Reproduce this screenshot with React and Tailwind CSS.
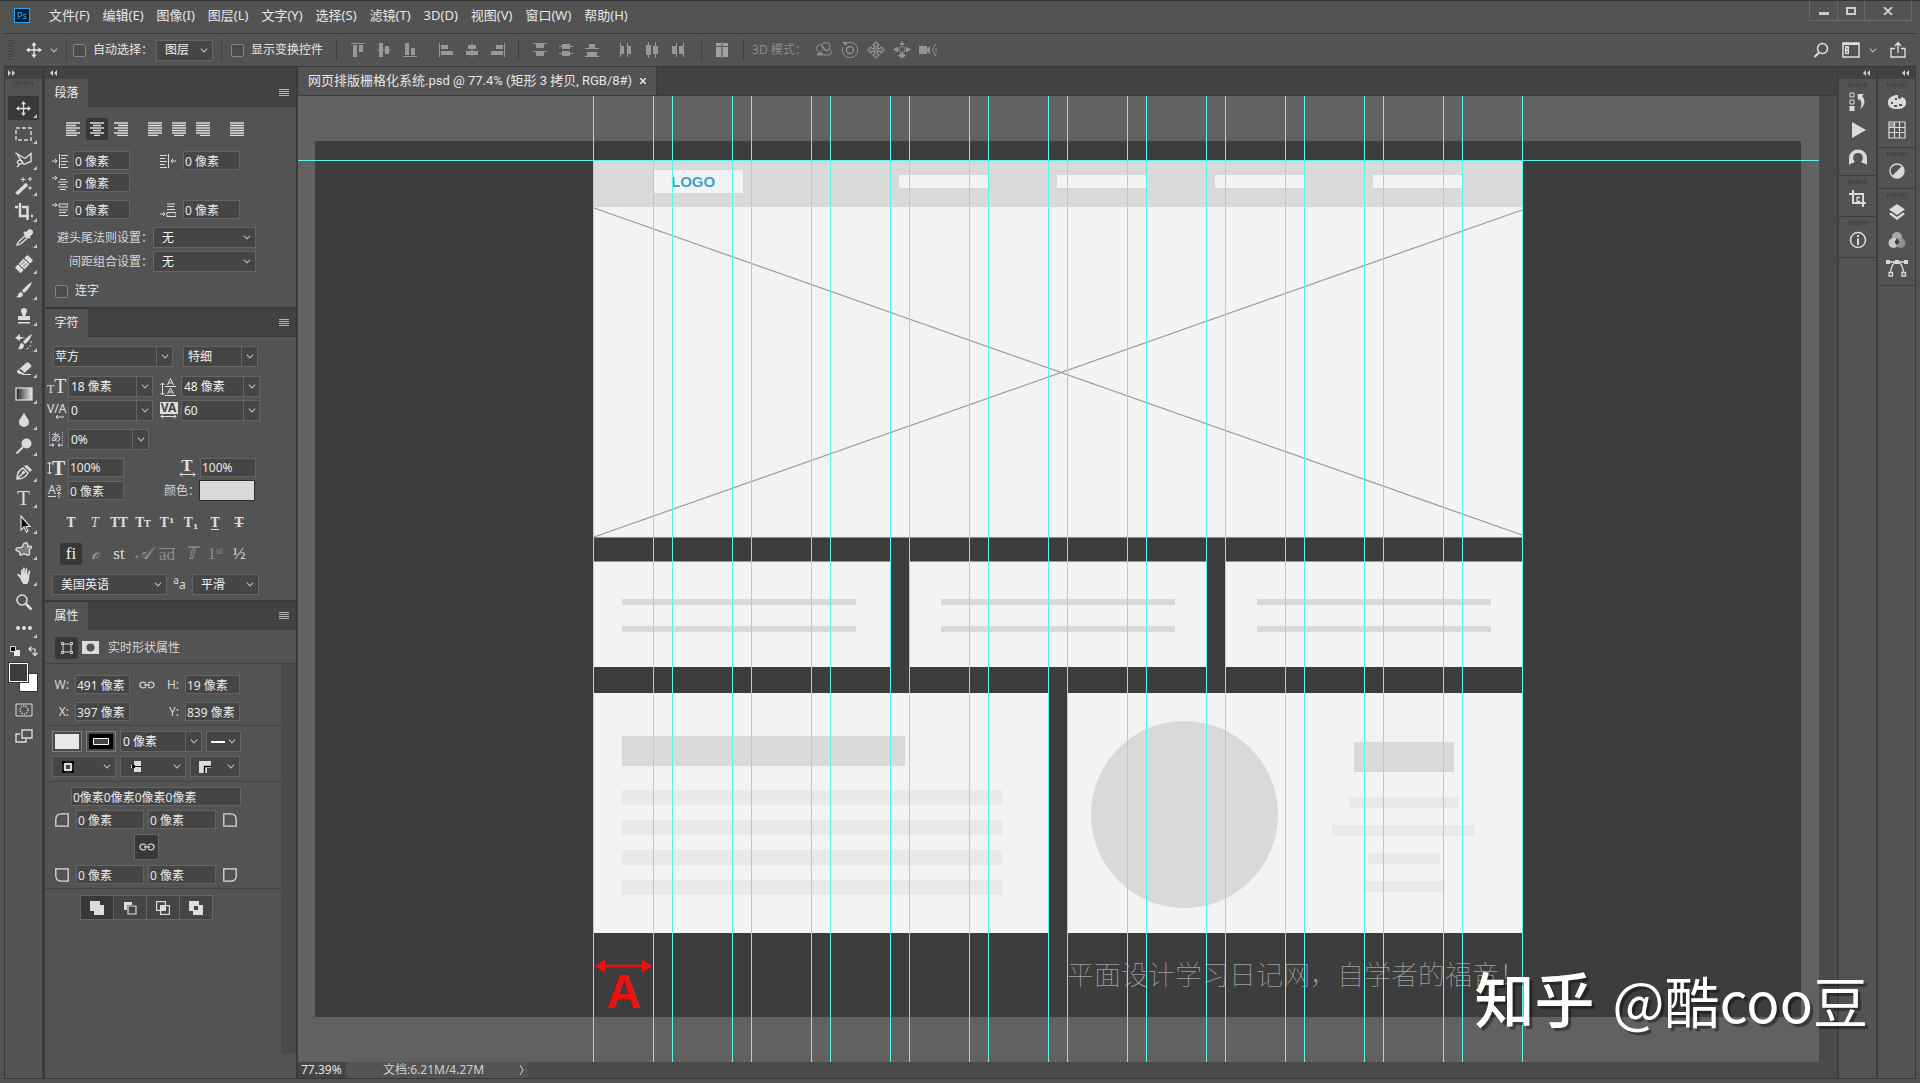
import React from 'react';
import clsx from 'clsx';

/* ---------- shared bits ---------- */

function Icon({ w = 18, h = 18, className, children }) {
  return (
    <svg width={w} height={h} viewBox={`0 0 ${w} ${h}`} fill="none" stroke="currentColor" className={clsx('shrink-0', className)} aria-hidden="true">
      {children}
    </svg>
  );
}

function Chevron({ className }) {
  return (
    <Icon w={8} h={5} className={clsx('text-[#b8b8b8]', className)}>
      <path d="M.8 .6 4 4 7.2 .6" strokeWidth="1.1" />
    </Icon>
  );
}

function Grip({ className }) {
  return (
    <div className={clsx('flex h-1 shrink-0 justify-center gap-px', className)}>
      {Array.from({ length: 10 }, (_, i) => <i key={i} className="w-px bg-[#3f3f3f]" />)}
    </div>
  );
}

function Field({ label, value, className }) {
  return (
    <input
      aria-label={label}
      defaultValue={value}
      className={clsx('h-[19px] border border-[#646464] bg-[#454545] px-px text-xs leading-4 text-[#e8e8e8] outline-none', className)}
    />
  );
}

function Select({ label, value, divider, className, pad = 'pl-2', children }) {
  return (
    <span className={clsx('relative flex h-[21px] shrink-0 items-center border border-[#646464] bg-[#454545]', className)}>
      {children}
      <select aria-label={label} className={clsx('h-full w-full appearance-none bg-transparent text-xs leading-4 text-[#f0f0f0] outline-none', pad)}>
        <option>{value}</option>
      </select>
      <span className={clsx('pointer-events-none absolute inset-y-0 right-0 flex w-4 items-center justify-center', divider && 'border-l border-[#646464]')}>
        <Chevron />
      </span>
    </span>
  );
}

function Check({ id, children, className }) {
  return (
    <label htmlFor={id} className={clsx('flex items-center gap-[7px] text-xs leading-4', className)}>
      <input id={id} type="checkbox" className="h-[13px] w-[13px] appearance-none rounded-[2px] border border-[#858585] bg-[#4b4b4b]" />
      {children}
    </label>
  );
}

function IconButton({ label, className, children }) {
  return (
    <button type="button" aria-label={label} className={clsx('flex shrink-0 items-center justify-center', className)}>
      {children}
    </button>
  );
}

function Vr() {
  return <div className="h-[22px] w-px shrink-0 bg-[#404040]" />;
}

/* ---------- menu bar ---------- */

const MENUS = ['文件(F)', '编辑(E)', '图像(I)', '图层(L)', '文字(Y)', '选择(S)', '滤镜(T)', '3D(D)', '视图(V)', '窗口(W)', '帮助(H)'];

function MenuBar() {
  return (
    <header className="flex h-8 shrink-0 items-start justify-between pr-2">
      <div className="flex h-7 items-center">
        <div className="ml-[14px] flex h-[15px] w-4 items-center justify-center border border-[#2fa3f7] bg-[#001d2f] text-[9px] leading-none text-[#35b4ff]">
          Ps
        </div>
        <nav className="ml-[19px] flex gap-[13px] text-[13px] leading-5">
          {MENUS.map((m) => <button key={m} type="button">{m}</button>)}
        </nav>
      </div>
      <div className="flex h-5 border border-t-0 border-[#686868] text-[#cccccc]">
        <IconButton label="最小化" className="w-[27px]">
          <Icon w={10} h={10}><path d="M0 7.5h10" strokeWidth="3" /></Icon>
        </IconButton>
        <IconButton label="最大化" className="w-[28px] border-x border-[#686868]">
          <Icon w={10} h={8}><path d="M1 1h8v6H1z" strokeWidth="2" /></Icon>
        </IconButton>
        <IconButton label="关闭" className="w-[46px]">
          <Icon w={10} h={8}><path d="M1 0l8 8M9 0L1 8" strokeWidth="2" /></Icon>
        </IconButton>
      </div>
    </header>
  );
}

/* ---------- options bar ---------- */

function MoveIcon({ size = 16 }) {
  return (
    <svg width={size} height={size} viewBox="0 0 16 16" fill="currentColor" aria-hidden="true">
      <path d="M8 0l2.600 3.400H8.700v3.900h3.900V5.400L16 8l-3.400 2.600V8.700H8.700v3.900h1.900L8 16l-2.600-3.400h1.900V8.700H3.400v1.900L0 8l3.400-2.600v1.900h3.900V3.400H5.400z" />
    </svg>
  );
}

const ALIGN_ICONS = {
  top: 'M1 1h14v1H1zM3 3h4v12H3zM9 3h4v7H9z',
  middle: 'M1 7.500h14v1H1zM3 1h4v14H3zM9 4h4v8H9z',
  bottom: 'M1 14h14v1H1zM3 1h4v12H3zM9 6h4v7H9z',
  left: 'M1 1h1v14H1zM3 3h7v4H3zM3 9h12v4H3z',
  center: 'M7.500 1h1v14h-1zM4 3h8v4H4zM2 9h12v4H2z',
  right: 'M14 1h1v14h-1zM6 3h7v4H6zM1 9h12v4H1z',
};
const SPREAD_ICONS = {
  top: 'M1 1h14v1H1zM4 2h8v4H4zM1 9h14v1H1zM4 10h8v4H4z',
  middle: 'M1 4h14v1H1zM4 2h8v5H4zM1 11h14v1H1zM4 9h8v5H4z',
  bottom: 'M1 6h14v1H1zM5 2h6v4H5zM1 14h14v1H1zM3 10h10v4H3z',
  left: 'M2 1h1v14H2zM3 4h3v8H3zM9 1h1v14H9zM10 4h3v8h-3z',
  center: 'M4 0h1v16H4zM2 3h5v10H2zM11 0h1v16h-1zM9 4h5v8H9z',
  right: 'M6 1h1v14H6zM2 4h4v8H2zM13 1h1v14h-1zM9 4h4v8H9z',
};

function GlyphGroup({ icons, prefix, gaps }) {
  return Object.entries(icons).map(([name, d], i) => (
    <IconButton key={name} label={prefix + name} className={clsx('h-5 w-4', gaps[i])}>
      <svg width="16" height="16" viewBox="0 0 16 16" fill="#989898" aria-hidden="true"><path d={d} /></svg>
    </IconButton>
  ));
}

function OptionsBar() {
  return (
    <div className="flex h-[33px] shrink-0 items-center border-t border-[#383838] pr-[9px]">
      <div className="ml-1 flex h-5 w-[5px] flex-col justify-between">
        {Array.from({ length: 8 }, (_, i) => <i key={i} className="h-px bg-[#434343]" />)}
      </div>
      <div className="ml-[13px] flex items-center gap-2">
        <MoveIcon />
        <Chevron />
      </div>
      <div className="ml-2"><Vr /></div>
      <Check id="auto-select" className="ml-1.5">自动选择：</Check>
      <Select label="自动选择" value="图层" className="ml-[3px] w-[57px]" />
      <div className="ml-2"><Vr /></div>
      <Check id="show-transform" className="ml-[9px]">显示变换控件</Check>
      <div className="ml-[13px]"><Vr /></div>
      <GlyphGroup icons={ALIGN_ICONS} prefix="对齐 " gaps={['ml-[13px]', 'ml-2.5', 'ml-2.5', 'ml-5', 'ml-2.5', 'ml-2.5']} />
      <div className="ml-3"><Vr /></div>
      <GlyphGroup icons={SPREAD_ICONS} prefix="分布 " gaps={['ml-[13px]', 'ml-2.5', 'ml-2.5', 'ml-[18px]', 'ml-2.5', 'ml-2.5']} />
      <div className="ml-[15px]"><Vr /></div>
      <IconButton label="自动对齐图层" className="ml-3 h-5 w-4">
        <svg width="16" height="16" viewBox="0 0 16 16" fill="#a2a2a2" aria-hidden="true">
          <path d="M2 1h5v3H2zM2 5h5v10H2zM9 1h5v3H9zM9 5h5v10H9zM7.600 0h.8v16h-.8z" />
        </svg>
      </IconButton>
      <div className="ml-[13px]"><Vr /></div>
      <span className="ml-2 w-[63px] text-xs leading-4 text-[#8c8c8c]">3D 模式：</span>
      <div className="flex gap-2 text-[#939393]">
        <IconButton label="旋转 3D 对象">
          <Icon><circle cx="11" cy="5.500" r="4" /><path d="M7 4C3 3 0 6 2 9c2 3 5 5 10 5 4 1 6-3 2-6" /><path d="M7 10l-5 4M7 5l6 6" /><path d="M2 12.500h6v2H2z" fill="currentColor" stroke="none" /></Icon>
        </IconButton>
        <IconButton label="滚动 3D 对象">
          <Icon><circle cx="9" cy="9" r="3.500" strokeWidth="1.300" /><path d="M5 2.500A7.600 7.600 0 1 1 2 6" /><path d="M1 1h4.500v4z" fill="currentColor" stroke="none" /></Icon>
        </IconButton>
        <IconButton label="拖动 3D 对象">
          <Icon><path d="M9 1l3 3-1.500 1v2.500H13L14 6l3 3-3 3-1-1.500h-2.500V13l1.500 1-3 3-3-3 1.500-1v-2.500H5L4 12 1 9l3-3 1 1.500h2.500V5L6 4z" strokeWidth="1.200" /><path d="M9 4v10M4 9h10" strokeWidth=".8" /></Icon>
        </IconButton>
        <IconButton label="滑动 3D 对象">
          <Icon><circle cx="9" cy="8.500" r="3" /><path d="M9 0l2.500 4h-5zM0 8.500l5-3v6zM18 8.500l-5-3v6zM9 17.500l-4-3 4-3 4 3z" fill="currentColor" stroke="none" /></Icon>
        </IconButton>
        <IconButton label="缩放 3D 对象">
          <Icon><path d="M0 5h8v3l3-3v8l-3-3v3H0z" fill="currentColor" stroke="none" /><path d="M17 3l-4 6 4 6M17 7v4" /></Icon>
        </IconButton>
      </div>
      <div className="ml-auto flex items-center text-[#e0e0e0]">
        <IconButton label="搜索">
          <Icon w={16} h={16}><circle cx="9.500" cy="6.500" r="5" strokeWidth="1.500" /><path d="M6 10.500L1.500 15" strokeWidth="2" /></Icon>
        </IconButton>
        <IconButton label="选择工作区" className="ml-[13px] gap-[9px]">
          <Icon w={18} h={16}><path d="M1 1h16v14H1z" strokeWidth="1.500" /><path d="M1 2h16" strokeWidth="2" /><path d="M3 4h4v8H3z" fill="currentColor" stroke="none" /><path d="M4.500 5.500h1v2h-1zM4.500 9h1v2h-1z" fill="#535353" stroke="none" /></Icon>
          <Chevron />
        </IconButton>
        <IconButton label="共享图像" className="ml-3">
          <Icon w={18} h={18}><path d="M6 7.500H2v8.500h14V7.500h-4M9 12V2M6 5l3-3.500L12 5" strokeWidth="1.300" /></Icon>
        </IconButton>
      </div>
    </div>
  );
}

/* ---------- toolbar ---------- */

const TOOLS = [
  ['移动', <MoveIcon size={15} />],
  ['矩形选框', <Icon h={16}><rect x="1" y="2" width="15" height="12" strokeWidth="1.400" strokeDasharray="4 2" /></Icon>],
  ['多边形套索', <Icon><path d="M1.500 2.500l8.500 5 6-5v8l-7 3-3-4-4-7zM6 9.500c-4-1-5 3-1.500 3.500 3 .5 4-3 1.500-3.500zM5 13l-3 3" strokeWidth="1.400" /></Icon>],
  ['魔棒', <Icon><path d="M1.500 17L12 7" strokeWidth="3.600" /><path d="M8 0v5M5.500 2.500h5M15 0v4M13 2h4M15 9v4M13 11h4" /></Icon>],
  ['裁剪', <Icon><path d="M5 0v13h9M7 4h5.500v13M16 13h2M0 4h3" strokeWidth="2.400" /></Icon>],
  ['吸管', <Icon><path d="M2 16c0-3 5-6 8-9l2 2c-3 3-6 7-10 7z" strokeWidth="1.400" /><path d="M9 3l6 6M14 1.500c2-1 4 1 2.500 3L13 8l-3-3z" strokeWidth="2" fill="currentColor" /></Icon>],
  ['修复画笔', <Icon><g transform="rotate(-45 9 9)"><rect x="0" y="5" width="18" height="8" rx="1.500" fill="currentColor" stroke="none" /><path d="M5 5v8M13 5v8" stroke="#535353" /><path d="M7 7.500h4M7 10.500h4" stroke="#535353" strokeDasharray="1.500 1" /></g></Icon>],
  ['画笔', <Icon><path d="M17 1C13 3 9 7 7 10l2 2c3-2 7-7 8-11z M6 11c-3 0-2 4-5 5 4 1 7 0 7-3z" fill="currentColor" stroke="none" /></Icon>],
  ['仿制图章', <Icon><path d="M6 4a3 3 0 1 1 6 0c0 2-1.500 2-1.500 5H15v4H3V9h4.500c0-3-1.500-3-1.500-5zM3 15h12v1.500H3z" fill="currentColor" stroke="none" /></Icon>],
  ['历史记录画笔', <Icon><path d="M17 1C13 3 10 6 8 9l2 2c3-2 6-6 7-10zM7 10c-3 0-2 5-4 6 4 1 6-1 6-4zM0 5l5-4v3c2 0 4 0 5 1-3 0-4 1-5 1v2z" fill="currentColor" stroke="none" /><path d="M16 8c1 5-2 8-6 8" strokeDasharray="2 2" /></Icon>],
  ['橡皮擦', <Icon><path d="M2 12l9-8c1-1 2-1 3 0l2 2c1 1 0 2 0 2l-8 7H4l-2-2z" fill="currentColor" stroke="none" /><path d="M4.500 10.500l4 3" stroke="#535353" strokeWidth="1.600" /><path d="M7 15.500h9" /></Icon>],
  ['渐变', <Icon w={18} h={14}>
    <defs><linearGradient id="ramp"><stop stopColor="#222" /><stop offset="1" stopColor="#e8e8e8" /></linearGradient></defs>
    <rect x="1" y="1" width="16" height="12" fill="url(#ramp)" strokeWidth="1.300" /></Icon>],
  ['模糊', <Icon><path d="M9 1c1 5 5 6 5 10a5 5 0 0 1-10 0c0-4 4-5 5-10z" fill="currentColor" stroke="none" /></Icon>],
  ['减淡', <Icon><circle cx="11.500" cy="6.500" r="5" fill="currentColor" stroke="none" /><path d="M8 10l-6.500 6.500" strokeWidth="2" /></Icon>],
  ['钢笔', <Icon><path d="M2 16c0-5 2-9 6-11l5 5c-2 4-6 6-11 6zM2 16l6-6" strokeWidth="1.500" /><circle cx="8.500" cy="9.500" r="1.200" fill="currentColor" /><path d="M9 3l6 6 2-2-5-5z" fill="currentColor" stroke="none" /></Icon>],
  ['文字', <span className="font-['Liberation_Serif',serif] text-[21px] leading-5">T</span>],
  ['路径选择', <Icon><path d="M6 1v14l3-3 2.500 5 1.500-1-2-4.500h4z" fill="#111" strokeWidth="1.200" /></Icon>],
  ['自定形状', <Icon><path d="M10 2c3-1 3 2 3 4 3-2 5 0 2 2-2 2 1 4-1 6-2 1-4-2-6-1-2 2-4 1-3-1 0-2-5-2-4-4 1-3 4 0 6-2 1-1 1-4 3-4z" fill="#7c7c7c" strokeWidth="1.400" /></Icon>],
  ['抓手', <Icon><path d="M4 11L1 7.500c1-1.500 2-.5 4 1V3c0-1 1.700-1 1.700 0l.3 4V1.500c0-1.300 1.800-1.300 1.800 0V7l.7-5c.1-1.200 1.800-1 1.700.2L11 8l1.500-4c.5-1 2-.6 1.700.5-.7 3-1 4-1 6.500-.5 3-1 5-2.200 6H7.500C6 15.500 5 13 4 11z" fill="currentColor" stroke="none" transform="translate(1 0)" /></Icon>],
  ['缩放', <Icon><circle cx="7" cy="7" r="5" strokeWidth="1.600" /><path d="M11 11l5.500 5.500" strokeWidth="2.500" /></Icon>],
  ['更多工具', <Icon w={18} h={6}><path d="M3 1a2 2 0 1 0 .01 0zM9 1a2 2 0 1 0 .01 0zM15 1a2 2 0 1 0 .01 0z" fill="currentColor" stroke="none" /></Icon>],
];

function ToolBar() {
  return (
    <aside className="flex w-[38px] shrink-0 flex-col items-center border-r border-[#3a3a3a] text-[#dcdcdc]">
      <div className="flex h-3 w-full items-center bg-[#424242] pl-[3px] text-[#d0d0d0]">
        <Icon w={8} h={6}><path d="M0 0l3 3-3 3zM4 0l3 3-3 3z" fill="currentColor" stroke="none" /></Icon>
      </div>
      <Grip className="mt-0.5" />
      <div className="mt-[11px] flex flex-col gap-0.5">
        {TOOLS.map(([name, icon], i) => (
          <IconButton
            key={name}
            label={name}
            className={clsx('relative h-6 w-[31px]', i === 0 && 'rounded-[2px] bg-[#383838]')}
          >
            {icon}
            {i !== 19 && <Icon w={4} h={4} className="absolute bottom-0.5 right-0.5"><path d="M4 0v4H0z" fill="#c4c4c4" stroke="none" /></Icon>}
          </IconButton>
        ))}
      </div>
      <div className="mt-1.5 flex w-[28px] items-center justify-between">
        <Icon w={10} h={10}><path d="M4 4h6v6H4z" fill="#e8e8e8" stroke="none" /><path d="M.5 .5h5v5h-5z" fill="#000" /></Icon>
        <Icon w={10} h={10}><path d="M1 3h6v6M3.500 .5L1 3l2.500 2.500M4.500 7L7 9.500 9.500 7" strokeWidth="1.200" /></Icon>
      </div>
      <div className="mt-[7px] grid w-[29px]">
        <button type="button" aria-label="背景色" className="col-start-1 row-start-1 ml-[10px] mt-[10px] h-[19px] w-[19px] border border-[#333] bg-white" />
        <button type="button" aria-label="前景色" className="col-start-1 row-start-1 h-[19px] w-[19px] border border-white bg-[#3c3c3c] outline outline-[#333]" />
      </div>
      <IconButton label="快速蒙版" className="mt-[11px]">
        <Icon w={18} h={14}><path d="M1 1h16v12H1z" /><circle cx="9" cy="7" r="4" strokeDasharray="1.300 1.200" strokeWidth="1.300" /></Icon>
      </IconButton>
      <IconButton label="屏幕模式" className="mt-3">
        <Icon w={18} h={14}><path d="M7 1h10v8H7z" strokeWidth="1.400" /><path d="M5 5H1v8h10v-3" strokeWidth="1.400" /></Icon>
      </IconButton>
    </aside>
  );
}

/* ---------- side panels ---------- */

function Panel({ title, className, children }) {
  return (
    <section className={clsx('flex flex-col text-xs', className)}>
      <header className="flex h-[28px] shrink-0 items-center justify-between border-b border-[#3c3c3c] bg-[#424242] pr-[7px]">
        <h2 className="-mb-px flex h-[28px] w-[43px] items-center justify-center bg-[#535353] text-[#ececec]">{title}</h2>
        <IconButton label="面板菜单" className="text-[#b4b4b4]">
          <Icon w={10} h={8}><path d="M0 .5h10M0 2.500h10M0 4.500h10M0 6.500h10" /></Icon>
        </IconButton>
      </header>
      {children}
    </section>
  );
}

// six text rules; each entry is [start, end] of one rule
function Rules({ rows }) {
  return (
    <Icon w={14} h={14} className="text-[#dcdcdc]">
      <path d={rows.map(([a, b], i) => `M${a} ${i * 2.5 + 1}H${b}`).join('')} strokeWidth="1.300" />
    </Icon>
  );
}

const FULL = [0, 14];
const ALIGNMENTS = [
  ['左对齐', [FULL, [0, 10], FULL, [0, 10], FULL, [0, 11]]],
  ['居中', [FULL, [3, 11], FULL, [3, 11], FULL, [4, 10]]],
  ['右对齐', [FULL, [4, 14], FULL, [4, 14], FULL, [3, 14]]],
  ['末行左对齐', [FULL, FULL, FULL, FULL, FULL, [0, 10]]],
  ['末行居中', [FULL, FULL, FULL, FULL, FULL, [2, 12]]],
  ['末行右对齐', [FULL, FULL, FULL, FULL, FULL, [4, 14]]],
  ['全部对齐', [FULL, FULL, FULL, FULL, FULL, FULL]],
];

function ParagraphPanel() {
  return (
    <Panel title="段落" className="h-[230px]">
      <div className="flex gap-0.5 pl-[17px] pt-[11px]">
        {ALIGNMENTS.map(([name, rows], i) => (
          <IconButton
            key={name}
            label={name}
            className={clsx('h-[22px] w-[22px]', i === 1 && 'rounded-[2px] bg-[#383838]', (i === 3 || i === 6) && 'ml-[10px]')}
          >
            <Rules rows={rows} />
          </IconButton>
        ))}
      </div>
      <div className="mt-[11px] flex items-center pl-[7px] text-[#dcdcdc]">
        <Icon w={16} h={14} className="mr-[5px]"><path d="M0 7h5M3 5l2 2-2 2M7.500 0v14M9 1.500h7M9 4.500h5M9 7.500h7M9 10.500h5M9 13.500h7" /></Icon>
        <Field label="左缩进" value="0 像素" className="w-[57px]" />
        <Icon w={16} h={14} className="ml-[30px] mr-[7px]"><path d="M16 7h-5M13 5l-2 2 2 2M8.500 0v14M0 1.500h7M0 4.500h5M0 7.500h7M0 10.500h5M0 13.500h7" /></Icon>
        <Field label="右缩进" value="0 像素" className="w-[57px]" />
      </div>
      <div className="mt-[3px] flex items-center pl-[7px] text-[#dcdcdc]">
        <Icon w={16} h={14} className="mr-[5px]"><path d="M0 2h4M3 0l2 2-2 2M8 3.500h6M6 6h10M8 8.500h6M6 11h10M8 13.500h6" /></Icon>
        <Field label="首行缩进" value="0 像素" className="w-[57px]" />
      </div>
      <div className="mt-2 flex items-center pl-[7px] text-[#dcdcdc]">
        <Icon w={16} h={14} className="mr-[5px]"><path d="M0 2h4M3 0l2 2-2 2M7 1h9v3H7zM7 7h9M7 9.500h7M7 12.500h9" /></Icon>
        <Field label="段前空格" value="0 像素" className="w-[57px]" />
        <Icon w={16} h={14} className="ml-[30px] mr-[7px]"><path d="M0 11h4M3 9l2 2-2 2M7 1h8M7 3.500h7M7 6.500h8M7 9.500h9v4H7z" /></Icon>
        <Field label="段后空格" value="0 像素" className="w-[57px]" />
      </div>
      <div className="mt-2 flex items-center text-[#d6d6d6]">
        <span className="w-[108px] whitespace-nowrap text-right">避头尾法则设置：</span>
        <Select label="避头尾法则设置" value="无" className="w-[103px]" />
      </div>
      <div className="mt-[3px] flex items-center text-[#d6d6d6]">
        <span className="w-[108px] whitespace-nowrap text-right">间距组合设置：</span>
        <Select label="间距组合设置" value="无" className="w-[103px]" />
      </div>
      <Check id="hyphenate" className="ml-[10px] mt-[11px]">连字</Check>
    </Panel>
  );
}

const STYLES = [
  ['仿粗体', <b className="font-black">T</b>],
  ['仿斜体', <i className="font-normal">T</i>],
  ['全部大写', 'TT'],
  ['小型大写', <span>T<span className="text-[9px]">T</span></span>],
  ['上标', <span>T<sup className="text-[8px]">1</sup></span>],
  ['下标', <span>T<sub className="text-[8px]">1</sub></span>],
  ['下划线', <span className="border-b border-current leading-3">T</span>],
  ['删除线', <s>T</s>],
];
const FEATURES = [
  ['标准连字', 'fi', 'text-[#f0f0f0] bg-[#383838] rounded-[2px]'],
  ['上下文替代字', <i>ℴ</i>, 'text-[#9a9a9a]'],
  ['自由连字', 'st', 'text-[#dcdcdc]'],
  ['花饰字', <i>𝒜</i>, 'text-[#9a9a9a]'],
  ['替代样式', <span className="border-t border-current leading-[12px]">ad</span>, 'text-[#8a8a8a]'],
  ['标题替代字', <i>𝕋</i>, 'text-[#9a9a9a]'],
  ['序数字', <span>1<sup className="text-[10px]">st</sup></span>, 'text-[#8a8a8a]'],
  ['分数字', '½', 'text-[#dcdcdc]'],
];

function CharacterPanel() {
  const serif = "font-['Liberation_Serif',serif]";
  return (
    <Panel title="字符" className="h-[293px]">
      <div className="mt-[9px] flex pl-2">
        <Select label="字体" value="苹方" divider pad="pl-px" className="w-[120px]" />
        <Select label="字体样式" value="特细" divider pad="pl-1" className="ml-[10px] w-[75px]" />
      </div>
      <div className="mt-[9px] flex h-[21px] items-center pl-0.5 text-[#e0e0e0]">
        <span className={clsx(serif, 'w-[21px] text-[20px] leading-5')}><span className="text-xs">T</span>T</span>
        <Select label="字体大小" value="18 像素" divider pad="pl-0.5" className="w-[85px]" />
        <Icon w={17} h={18} className="ml-[7px] mr-1">
          <path d="M2.500 5v12M.5 7l2-2 2 2M.5 15l2 2 2-2M5 17.500h11M5 8.500h11M7.500 7l3-6.500 3 6.500M8.500 5h4M7.500 16l3-6 3 6M8.500 14h4" />
        </Icon>
        <Select label="行距" value="48 像素" divider pad="pl-0.5" className="w-[79px]" />
      </div>
      <div className="mt-[3px] flex h-[21px] items-center pl-0.5 text-[#e0e0e0]">
        <span className="flex w-[21px] flex-col text-[12px] leading-[12px]">V/A
          <Icon w={10} h={4} className="ml-2"><path d="M9 2H1M3 0L1 2l2 2" /></Icon>
        </span>
        <Select label="字距微调" value="0" divider pad="pl-0.5" className="w-[85px]" />
        <span className="ml-[6px] mr-[3px] flex w-[19px] flex-col items-center">
          <span className="w-[18px] bg-[#dedede] text-center text-[12px] font-bold leading-[12px] text-[#444]">VA</span>
          <Icon w={17} h={5}><path d="M1 2.500h15M3 .5l-2 2 2 2M14 .5l2 2-2 2" /></Icon>
        </span>
        <Select label="字距调整" value="60" divider pad="pl-0.5" className="w-[79px]" />
      </div>
      <div className="mt-2 flex h-[21px] items-center pl-1 text-[#dcdcdc]">
        <span className="flex w-[19px] flex-col text-[10px] leading-[11px]">
          <span className="w-[14px] border-x border-dotted border-[#b0b0b0] text-center">あ</span>
          <Icon w={14} h={4}><path d="M0 2h5M3 .5L5 2 3 3.500M14 2H9M11 .5L9 2l2 1.500" /></Icon>
        </span>
        <Select label="比例间距" value="0%" divider pad="pl-0.5" className="w-[81px]" />
      </div>
      <div className="mt-[7px] flex h-[21px] items-center pl-0.5 text-[#e0e0e0]">
        <span className="flex w-[21px] items-center">
          <Icon w={5} h={14}><path d="M2.500 1v12M.5 3l2-2 2 2M.5 11l2 2 2-2" /></Icon>
          <span className={clsx(serif, 'text-[20px] font-bold leading-5')}>T</span>
        </span>
        <Field label="垂直缩放" value="100%" className="w-[56px]" />
        <span className={clsx(serif, 'ml-[54px] mr-1 flex w-[18px] flex-col items-center text-[17px] font-bold leading-[13px]')}>T
          <Icon w={17} h={5}><path d="M1 2.500h15M3 .5l-2 2 2 2M14 .5l2 2-2 2" /></Icon>
        </span>
        <Field label="水平缩放" value="100%" className="w-[56px]" />
      </div>
      <div className="mt-0.5 flex h-[21px] items-center pl-[3px] text-[#d6d6d6]">
        <span className="flex w-5 items-start">
          <span className="border-b border-current text-[12px] leading-[13px]">A</span>
          <span className="flex flex-col items-center text-[10px] leading-[8px]">a
            <Icon w={6} h={7}><path d="M3 7V1M1 3l2-2 2 2" /></Icon>
          </span>
        </span>
        <Field label="基线偏移" value="0 像素" className="w-[56px]" />
        <span className="ml-10 w-[35px] whitespace-nowrap">颜色：</span>
        <button type="button" aria-label="文本颜色" className="h-[21px] w-[56px] border border-[#2c2c2c] bg-[#d9d9d9]" />
      </div>
      <div className="mt-[11px] flex gap-0.5 pl-[15px] font-['DejaVu_Serif',serif] text-[12px] font-bold text-[#dcdcdc]">
        {STYLES.map(([name, glyph]) => <IconButton key={name} label={name} className="h-[22px] w-[22px] leading-4">{glyph}</IconButton>)}
      </div>
      <div className={clsx(serif, 'mt-[9px] flex gap-0.5 pl-[15px] text-[17px]')}>
        {FEATURES.map(([name, glyph, tone]) => (
          <IconButton key={name} label={name} className={clsx('h-[22px] w-[22px] leading-4', tone)}>{glyph}</IconButton>
        ))}
      </div>
      <div className="mt-[9px] flex h-[21px] items-center pl-[7px]">
        <Select label="语言" value="美国英语" className="w-[115px]" />
        <span className="w-[25px] text-center text-[#dcdcdc]"><sup className="text-[10px]">a</sup>a</span>
        <Select label="消除锯齿" value="平滑" className="w-[67px]" />
      </div>
    </Panel>
  );
}

function LinkIcon() {
  return (
    <Icon w={16} h={8} className="text-[#cfcfcf]">
      <path d="M7 2.500C6 .5 1 .5 1 4s5 3.500 6 1.500M9 2.500c1-2 6-2 6 1.500s-5 3.500-6 1.500M5 4h6" strokeWidth="1.300" />
    </Icon>
  );
}

function Corner({ turn }) {
  return (
    <Icon w={14} h={14} className="text-[#dcdcdc]">
      <path d="M.8 13.200V6.500Q.8 .8 6.500 .8h6.700v12.400z" strokeWidth="1.300" transform={`rotate(${turn} 7 7)`} />
    </Icon>
  );
}

const PATH_OPS = [
  ['合并形状', <path d="M0 0h10v4h4v10H4v-4H0z" fill="currentColor" stroke="none" />],
  ['减去顶层形状', <><path d="M1 1h8v3H4v5H1z" fill="currentColor" stroke="none" /><path d="M5 5h8v8H5z" strokeWidth="1.200" /></>],
  ['与形状区域相交', <><path d="M.6 .6h8.800v8.800H.6zM4.600 4.600h8.800v8.800H4.600z" strokeWidth="1.200" /><path d="M5 5h4v4H5z" fill="currentColor" stroke="none" /></>],
  ['排除重叠形状', <path d="M0 0h10v4h4v10H4v-4H0zM5 5v4h4V5z" fill="currentColor" stroke="none" fillRule="evenodd" />],
];

function PropertiesPanel() {
  return (
    <Panel title="属性" className="min-h-0 flex-1">
      <div className="flex h-[34px] shrink-0 items-center border-b border-[#424242] pl-[10px] pt-0.5 text-[#d6d6d6]">
        <IconButton label="形状属性" className="h-[22px] w-[23px] rounded-[2px] bg-[#383838]">
          <Icon w={12} h={12}><path d="M2 2h8v8H2z" /><path d="M.5 .5h2v2h-2zM9.500 .5h2v2h-2zM.5 9.500h2v2h-2zM9.500 9.500h2v2h-2z" fill="#383838" /></Icon>
        </IconButton>
        <IconButton label="蒙版" className="ml-1">
          <Icon w={17} h={13}><path d="M0 0h17v13H0z" fill="#dcdcdc" stroke="none" /><circle cx="8.500" cy="6.500" r="4" fill="#535353" stroke="none" /></Icon>
        </IconButton>
        <span className="ml-[9px]">实时形状属性</span>
      </div>
      <div className="flex min-h-0 flex-1">
        <div className="flex min-w-0 flex-1 flex-col text-[#d6d6d6]">
          <div className="flex flex-col gap-2 border-b border-[#424242] pb-1 pt-[11px]">
            <div className="flex items-center">
              <span className="w-[30px] pr-[6px] text-right">W:</span>
              <Field label="宽度" value="491 像素" className="w-[55px]" />
              <span className="flex w-[34px] justify-center"><LinkIcon /></span>
              <span className="w-[21px] pr-[6px] text-right">H:</span>
              <Field label="高度" value="19 像素" className="w-[55px]" />
            </div>
            <div className="flex items-center">
              <span className="w-[30px] pr-[6px] text-right">X:</span>
              <Field label="水平位置" value="397 像素" className="w-[55px]" />
              <span className="w-[55px] pr-[6px] text-right">Y:</span>
              <Field label="垂直位置" value="839 像素" className="w-[55px]" />
            </div>
          </div>
          <div className="flex flex-col gap-1 border-b border-[#424242] pb-1 pl-[7px] pt-[5px]">
            <div className="flex items-center">
              <button type="button" aria-label="填充" className="h-[21px] w-[30px] border border-[#808080] bg-[#e8e8e8] outline-2 -outline-offset-3 outline-[#4a4a4a]" />
              <IconButton label="描边" className="ml-1 h-[21px] w-[30px] border border-[#808080] bg-black outline-2 -outline-offset-3 outline-[#4a4a4a]">
                <Icon w={16} h={7}><path d="M.5 .5h15v6H.5z" fill="#454545" stroke="#fff" /></Icon>
              </IconButton>
              <Select label="描边宽度" value="0 像素" divider pad="pl-0.5" className="ml-1 w-[82px]" />
              <Select label="描边类型" value="" pad="pl-0" className="ml-1 w-[35px]">
                <Icon w={14} h={2} className="absolute left-1"><path d="M0 1h14" stroke="#fff" strokeWidth="2" /></Icon>
              </Select>
            </div>
            <div className="flex items-center gap-1">
              <Select label="描边对齐" value="" className="w-16">
                <Icon w={12} h={12} className="absolute left-[9px]"><path d="M1 1h10v10H1z" stroke="#000" /><path d="M0 0h3v3H0zM9 0h3v3H9zM0 9h3v3H0zM9 9h3v3H9z" fill="#000" stroke="none" /><path d="M3 3h6v6H3z" stroke="#dcdcdc" strokeWidth="2" /></Icon>
              </Select>
              <Select label="描边端点" value="" className="w-[66px]">
                <Icon w={10} h={11} className="absolute left-[10px]"><path d="M3 0h7v11H3V7H0V4h3z" fill="#dcdcdc" stroke="none" /><path d="M1 5.500h9" stroke="#000" /><path d="M1 4h3v3H1z" fill="#000" stroke="none" /></Icon>
              </Select>
              <Select label="描边角" value="" className="w-[50px]">
                <Icon w={12} h={12} className="absolute left-[8px]"><path d="M0 0h12v7H8v5H0z" fill="#dcdcdc" stroke="none" /><path d="M12 5.500H5.500V12" stroke="#000" strokeWidth="1.300" /></Icon>
              </Select>
            </div>
          </div>
          <div className="flex flex-col border-b border-[#424242] pb-1 pt-[5px]">
            <Field label="圆角半径" value="0像素0像素0像素0像素" className="ml-[26px] w-[170px]" />
            <div className="mt-1 flex items-center pl-[10px]">
              <Corner turn={0} />
              <Field label="左上角半径" value="0 像素" className="ml-[7px] w-[68px]" />
              <Field label="右上角半径" value="0 像素" className="ml-1 w-[68px]" />
              <span className="ml-[7px]"><Corner turn={90} /></span>
            </div>
            <IconButton label="链接圆角半径" className="my-[5px] ml-[89px] h-[26px] w-[25px] border border-[#646464] bg-[#383838]"><LinkIcon /></IconButton>
            <div className="flex items-center pl-[10px]">
              <Corner turn={270} />
              <Field label="左下角半径" value="0 像素" className="ml-[7px] w-[68px]" />
              <Field label="右下角半径" value="0 像素" className="ml-1 w-[68px]" />
              <span className="ml-[7px]"><Corner turn={180} /></span>
            </div>
          </div>
          <div className="ml-[35px] mt-[6px] flex h-[25px] w-[133px] divide-x divide-[#646464] border border-[#646464]">
            {PATH_OPS.map(([name, shape], i) => (
              <IconButton key={name} label={name} className={clsx('flex-1 text-[#dcdcdc]', i === 0 ? 'bg-[#383838]' : 'bg-[#454545]')}>
                <Icon w={14} h={14}>{shape}</Icon>
              </IconButton>
            ))}
          </div>
        </div>
        <div className="mb-6 w-[15px] shrink-0 bg-[#4a4a4a]" />
      </div>
    </Panel>
  );
}

/* ---------- document ---------- */

function Guides() {
  return (
    <div className="pointer-events-none absolute inset-0 pl-[17px] pr-[18px]">
      <div className="mx-auto flex h-full w-[930px] gap-[18px]">
        {Array.from({ length: 12 }, (_, i) => <i key={i} className="flex-1 border-x border-[#5cf3ee]" />)}
      </div>
      <div className="absolute inset-x-0 top-16 h-px bg-[#5cf3ee]" />
    </div>
  );
}

function Card({ shift }) {
  return (
    <div className={clsx('flex h-[106px] flex-col gap-[21px] border-t border-[#9a9a9a] bg-[#f3f3f3] pt-[37px]', shift)}>
      <i className="h-1.5 w-[234px] bg-[#d9d9d9]" />
      <i className="h-1.5 w-[234px] bg-[#d9d9d9]" />
    </div>
  );
}

function Artboard() {
  return (
    <div className="mx-auto w-[930px] pt-5">
      <div className="flex h-[46px] items-start bg-[#d9d9d9] pl-[60px] pr-[60px]">
        <div className="mt-[9px] h-[23px] w-[90px] bg-[#f3f3f3] pl-[18px] font-['Liberation_Sans',sans-serif] text-[15px] font-bold leading-[23px] text-[#3ba3c8]">LOGO</div>
        <div className="ml-auto mt-[14px] flex gap-[68px]">
          {[0, 1, 2, 3].map((i) => <i key={i} className="h-[13px] w-[90px] bg-[#f3f3f3]" />)}
        </div>
      </div>
      <div className="h-[331px] border-b border-[#8c8c8c] bg-[#f3f3f3]">
        <svg className="block h-full w-full" viewBox="0 0 930 330" preserveAspectRatio="none" stroke="#9b9b9b" strokeWidth="1.200">
          <path d="M1 1L929 328M929 3L1 330" />
        </svg>
      </div>
      <div className="mt-[23px] grid grid-cols-3 gap-[18px]">
        <Card shift="pl-[29px]" />
        <Card shift="pl-8" />
        <Card shift="pl-8" />
      </div>
      <div className="mt-[26px] grid grid-cols-2 gap-[18px]">
        <div className="flex h-60 flex-col gap-[15px] bg-[#f3f3f3] pl-[29px] pt-[43px]">
          <i className="mb-[9px] h-[30px] w-[283px] bg-[#d9d9d9]" />
          {[0, 1, 2, 3].map((i) => <i key={i} className="h-[15px] w-[380px] bg-[#e9e9e9]" />)}
        </div>
        <div className="flex h-60 bg-[#f3f3f3]">
          <div className="ml-6 mt-7 h-[187px] w-[187px] rounded-full bg-[#d9d9d9]" />
          <div className="ml-[54px] flex w-[143px] flex-col items-center gap-[17px] pt-[49px]">
            <i className="mb-2 h-[30px] w-[100px] bg-[#d9d9d9]" />
            <i className="h-[11px] w-[109px] bg-[#e9e9e9]" />
            <i className="h-[11px] w-[143px] bg-[#e9e9e9]" />
            <i className="h-[11px] w-[72px] bg-[#e9e9e9]" />
            <i className="h-[11px] w-[82px] bg-[#e9e9e9]" />
          </div>
        </div>
      </div>
      <div className="flex justify-between">
        <div className="flex w-[61px] flex-col items-center pt-[26px] text-[#ee1111]">
          <Icon w={57} h={14}><path d="M8 7h41" strokeWidth="2.500" /><path d="M0 7l10-6.500v13zM57 7L47 .5v13z" fill="currentColor" stroke="none" /></Icon>
          <span className="font-['Liberation_Sans',sans-serif] text-[48px] font-bold leading-[38px]">A</span>
        </div>
        <p className="w-[456px] whitespace-nowrap pt-[26px] text-[27px] font-thin leading-8 text-[#a0a0a0]">平面设计学习日记网，自学者的福音！</p>
      </div>
    </div>
  );
}

function Document() {
  return (
    <main className="flex min-w-0 flex-1 flex-col">
      <div className="flex h-[29px] shrink-0 border-b border-[#3a3a3a] bg-[#424242]">
        <div className="flex items-center gap-2 border-r border-[#3a3a3a] bg-[#535353] px-[10px] font-['Roboto','Noto_Sans_CJK_SC',sans-serif] text-[13px] leading-5">
          网页排版栅格化系统.psd @ 77.4% (矩形 3 拷贝, RGB/8#)
          <IconButton label="关闭文档"><Icon w={6} h={6}><path d="M0 0l6 6M6 0L0 6" strokeWidth="1.500" /></Icon></IconButton>
        </div>
      </div>
      <div className="flex min-h-0 flex-1">
        <div className="flex min-w-0 flex-1 flex-col">
          <div className="relative flex-1 overflow-hidden bg-[#616161] py-[45px] pl-[17px] pr-[18px]">
            <div className="h-full bg-[#3d3d3d]"><Artboard /></div>
            <Guides />
          </div>
          <div className="flex h-4 shrink-0 items-center bg-[#4a4a4a] text-xs leading-4">
            <span className="w-12 bg-[#454545] pl-[3px]">77.39%</span>
            <span className="flex w-[182px] items-center justify-between bg-[#535353] pl-[37px] pr-1 text-[#d0d0d0]">
              文档:6.21M/4.27M
              <Icon w={5} h={10}><path d="M1 0l3 5-3 5" /></Icon>
            </span>
          </div>
        </div>
        <div className="w-[18px] shrink-0 bg-[#4a4a4a]" />
      </div>
    </main>
  );
}

/* ---------- collapsed docks ---------- */

const HISTORY = <Icon w={18} h={20}><path d="M1 1h4v4H1zM1 8h4v4H1z" /><path d="M.5 14h5v5h-5z" fill="currentColor" stroke="none" /><path d="M8.500 2H15l-2 2c4 4 3 10-2 13 2-4 2-7-.5-10L9 8.500z" fill="currentColor" stroke="none" /></Icon>;
const PLAY = <Icon><path d="M3 1l14 8-14 8z" fill="currentColor" stroke="none" /></Icon>;
const PERSON = <Icon w={20} h={18}><path d="M1 16V9a9 8.500 0 0 1 18 0v7c-1-1-3-2-5.500-2.500v-1C16 9 15 4 10 4s-6 5-3.500 8.500v1C4 14 2 15 1 16z" fill="currentColor" stroke="none" /><path d="M6 17.500c0-2 1-3 2-3.500h4c1 .5 2 1.500 2 3.500" strokeWidth="1.500" stroke="#4a4a4a" /></Icon>;
const CROP = <Icon w={20} h={20}><path d="M5 1v13h13M1 5h14v13" strokeWidth="2" /><path d="M12 8.500H9v4h3" strokeWidth="1.300" /></Icon>;
const INFO = <Icon><circle cx="9" cy="9" r="7.500" strokeWidth="1.500" /><path d="M9 7.500V14M9 4v2" strokeWidth="2" /></Icon>;
const PALETTE = <Icon w={20} h={16}><path d="M1 10C0 5 4 2 9 1l2 0v3l2 1 2-2c3 1 4 3 4 6 0 4-4 6-9 6-6 0-8-2-9-5zM4 8h2v2H4zM7 11h3v2H7zM8 4h2v2H8zM12 10h3v2h-3z" fill="currentColor" stroke="none" fillRule="evenodd" /></Icon>;
const SWATCHES = <Icon w={18} h={18}><path d="M1 1h16v16H1zM1 6.500h16M1 11.500h16M6.500 1v16M11.500 1v16" strokeWidth="1.200" /><path d="M2 2h4v4H2z" fill="#999" stroke="none" /></Icon>;
const ADJUST = <Icon><circle cx="9" cy="9" r="7" strokeWidth="1.300" /><path d="M14 4A7 7 0 0 1 4 14z" fill="currentColor" stroke="none" /></Icon>;
const LAYERS = <Icon w={18} h={18}><path d="M9 1l8 5.500L9 12 1 6.500zM1 11l2-1.500 6 4.500 6-4.500 2 1.500-8 6z" fill="currentColor" stroke="none" /></Icon>;
const CHANNELS = <Icon><g stroke="none"><circle cx="9" cy="6" r="5" fill="#aaa" /><circle cx="5.500" cy="12" r="5" fill="#dcdcdc" fillOpacity=".85" /><circle cx="12.500" cy="12" r="5" fill="#999" fillOpacity=".85" /><path d="M9 7l2.500 4L9 14l-2.500-3z" fill="#3c3c3c" /></g></Icon>;
const PATHS = <Icon w={22} h={18}><path d="M2 3h18M9 3c-3 3-4 6-4.500 10M13 3c3 3 4 6 4.500 10" strokeWidth="1.300" /><path d="M0 1h4v4H0zM9 1h4v4H9zM18 1h4v4h-4z" fill="currentColor" stroke="none" /><path d="M3 13.500h3.500V17H3zM16 13.500h3.500V17H16z" strokeWidth="1.300" /></Icon>;

const LEFT_DOCK = [[['历史记录', HISTORY], ['动作', PLAY], ['用户', PERSON]], [['裁剪', CROP]], [['信息', INFO]]];
const RIGHT_DOCK = [[['颜色', PALETTE], ['色板', SWATCHES]], [['调整', ADJUST]], [['图层', LAYERS], ['通道', CHANNELS], ['路径', PATHS]]];

function Dock({ groups }) {
  return (
    <aside className="flex w-[39px] shrink-0 flex-col border-l-2 border-[#3d3d3d] text-[#dadada]">
      <div className="flex h-3 items-center justify-end bg-[#424242] pr-[6px] text-[#d0d0d0]">
        <Icon w={7} h={6}><path d="M3 0L0 3l3 3zM7 0L4 3l3 3z" fill="currentColor" stroke="none" /></Icon>
      </div>
      {groups.map((group, i) => (
        <div key={i} className="flex flex-col items-center border-b border-[#3d3d3d] pb-[3px]">
          <Grip className="mt-1" />
          <div className="mt-px flex flex-col">
            {group.map(([name, icon]) => <IconButton key={name} label={name} className="h-[28px] w-8">{icon}</IconButton>)}
          </div>
        </div>
      ))}
    </aside>
  );
}

export default function App() {
  return (
    <div className="relative flex h-screen flex-col overflow-hidden border-t border-[#353535] bg-[#535353] font-['Noto_Sans','Noto_Sans_CJK_SC',sans-serif] text-[#e6e6e6]">
      <MenuBar />
      <div className="mx-1 mb-1 flex min-h-0 flex-1 flex-col border-b border-[#383838]">
        <OptionsBar />
        <div className="flex min-h-0 flex-1 border border-b-0 border-[#383838]">
          <ToolBar />
          <div className="flex w-[255px] shrink-0 flex-col border-x-2 border-[#3a3a3a]">
            <div className="flex h-3 shrink-0 items-center bg-[#424242] pl-[5px] text-[#d0d0d0]">
              <Icon w={7} h={6}><path d="M3 0L0 3l3 3zM7 0L4 3l3 3z" fill="currentColor" stroke="none" /></Icon>
            </div>
            <div className="flex min-h-0 flex-1 flex-col divide-y-2 divide-[#3a3a3a]">
              <ParagraphPanel />
              <CharacterPanel />
              <PropertiesPanel />
            </div>
          </div>
          <Document />
          <Dock groups={LEFT_DOCK} />
          <Dock groups={RIGHT_DOCK} />
        </div>
      </div>
      <div className="pointer-events-none absolute bottom-11 right-[52px] flex items-baseline gap-[18px] whitespace-nowrap font-['Noto_Sans_CJK_SC',sans-serif] text-white [text-shadow:3px_3px_1px_rgba(0,0,0,0.4)]">
        <span className="text-[60px] font-medium leading-[80px]">知乎</span>
        <span className="text-[55px] leading-[80px]">@酷coo豆</span>
      </div>
    </div>
  );
}
